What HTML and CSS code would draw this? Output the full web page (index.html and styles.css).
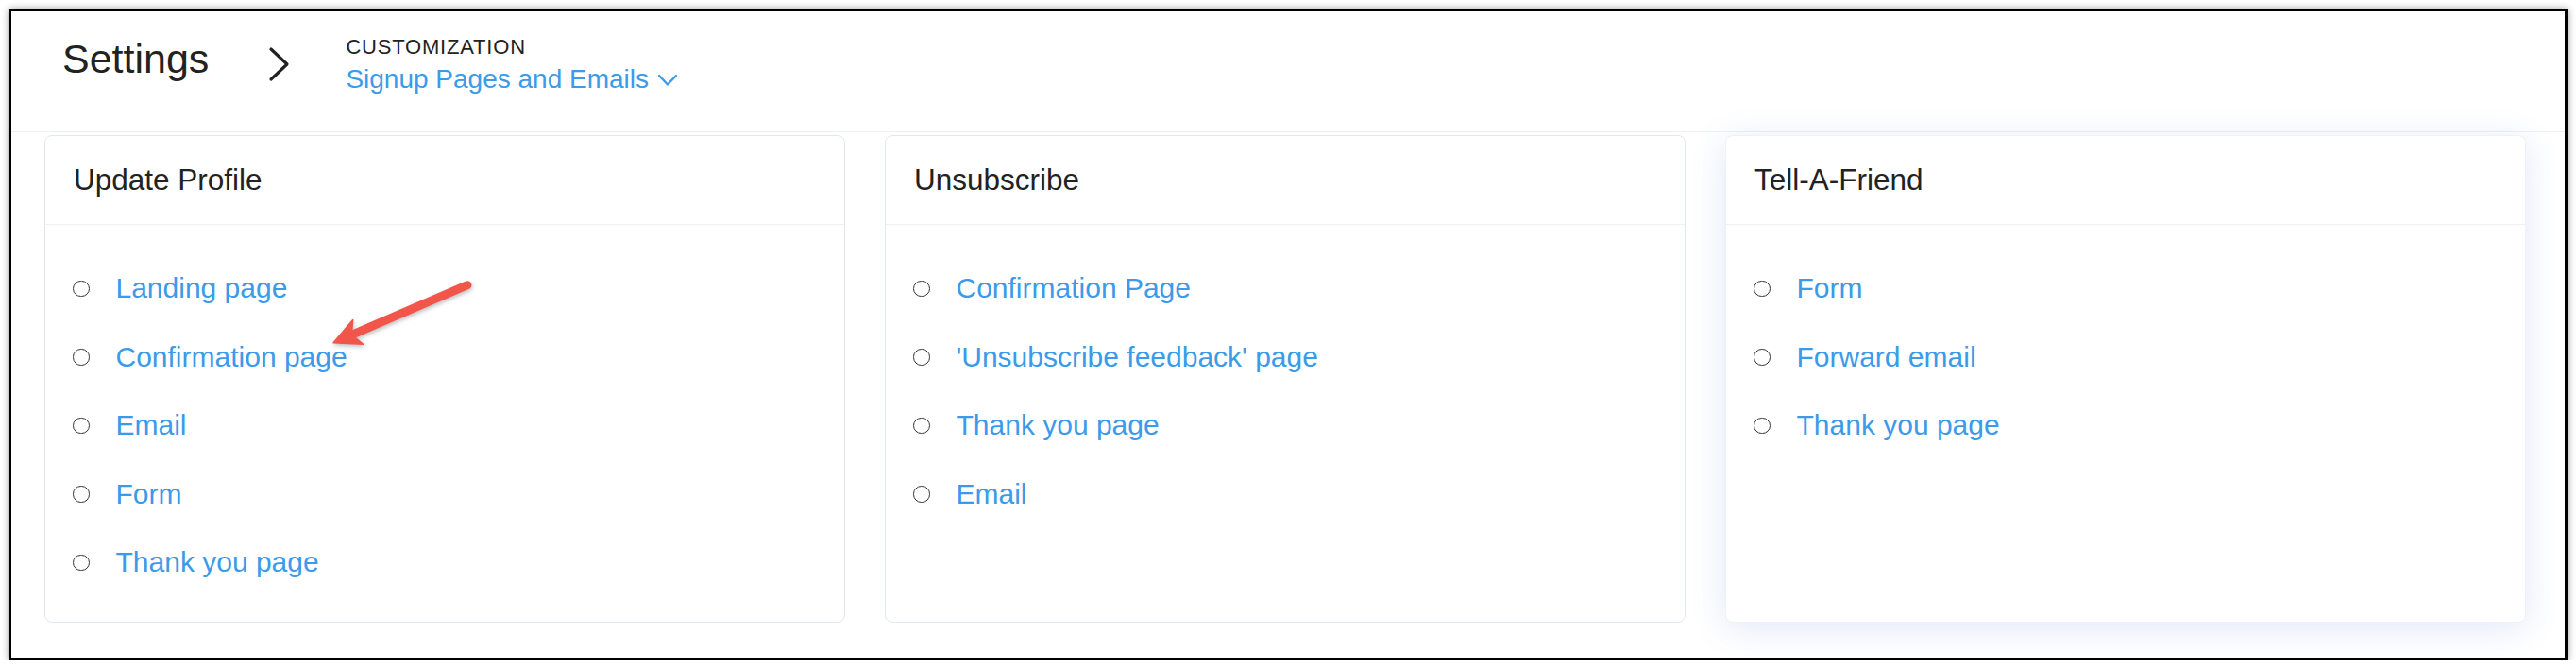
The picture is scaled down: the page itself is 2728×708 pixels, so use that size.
FILE: index.html
```html
<!DOCTYPE html>
<html lang="en">
<head>
<meta charset="utf-8">
<title>Settings - Signup Pages and Emails</title>
<link rel="stylesheet" href="styles.css">
</head>
<body>
<div class="frame">
  <header class="topbar">
    <h1 class="page-title">Settings</h1>
    <svg class="crumb-sep" width="26" height="38" viewBox="0 0 26 38" aria-hidden="true">
      <polyline points="4,3 21,19 4,35" fill="none" stroke="#222" stroke-width="3.2" stroke-linecap="round" stroke-linejoin="round"/>
    </svg>
    <div class="crumb">
      <div class="crumb-label">CUSTOMIZATION</div>
      <div class="crumb-current">Signup Pages and Emails<svg class="caret" width="22" height="14" viewBox="0 0 22 14" aria-hidden="true"><polyline points="2,2 11,11.5 20,2" fill="none" stroke="currentColor" stroke-width="2.4" stroke-linecap="round" stroke-linejoin="round"/></svg></div>
    </div>
  </header>

  <main class="cards">
    <section class="card">
      <div class="card-head">Update Profile</div>
      <ul class="card-list">
        <li><span class="dot"></span><a href="#">Landing page</a></li>
        <li><span class="dot"></span><a href="#">Confirmation page</a></li>
        <li><span class="dot"></span><a href="#">Email</a></li>
        <li><span class="dot"></span><a href="#">Form</a></li>
        <li><span class="dot"></span><a href="#">Thank you page</a></li>
      </ul>
    </section>
    <section class="card">
      <div class="card-head">Unsubscribe</div>
      <ul class="card-list">
        <li><span class="dot"></span><a href="#">Confirmation Page</a></li>
        <li><span class="dot"></span><a href="#">'Unsubscribe feedback' page</a></li>
        <li><span class="dot"></span><a href="#">Thank you page</a></li>
        <li><span class="dot"></span><a href="#">Email</a></li>
      </ul>
    </section>
    <section class="card card-hover">
      <div class="card-head">Tell-A-Friend</div>
      <ul class="card-list">
        <li><span class="dot"></span><a href="#">Form</a></li>
        <li><span class="dot"></span><a href="#">Forward email</a></li>
        <li><span class="dot"></span><a href="#">Thank you page</a></li>
      </ul>
    </section>
  </main>

  <svg class="annotation" width="180" height="100" viewBox="0 0 180 100" aria-hidden="true">
    <g transform="translate(155 16.7) rotate(156.75)">
      <line x1="0" y1="0" x2="134" y2="0" stroke="#f2564a" stroke-width="9" stroke-linecap="round"/>
      <polygon points="154.5,0 126,-14 133.5,0 126,14" fill="#f2564a" stroke="#f2564a" stroke-width="1.5" stroke-linejoin="round"/>
    </g>
  </svg>
</div>
</body>
</html>
```

FILE: styles.css
```css
* {
  box-sizing: border-box;
}

html, body {
  margin: 0;
  padding: 0;
  background: #ffffff;
}

body {
  padding: 10px 0 0 10px;
  font-family: "Liberation Sans", Arial, Helvetica, sans-serif;
  color: #222222;
}

.frame {
  position: relative;
  width: 2709px;
  height: 689px;
  border: 2px solid #000000;
  border-right-width: 3px;
  border-bottom-width: 3px;
  background: #ffffff;
  box-shadow: 0 0 8px rgba(0, 0, 0, 0.45);
  overflow: hidden;
}

/* ---------- top bar ---------- */
.topbar {
  display: flex;
  align-items: flex-start;
  height: 128px;
  padding: 23px 0 0 54px;
  border-bottom: 1px solid #edf0f5;
}

.page-title {
  margin: 2px 62px 0 0;
  font-size: 43px;
  line-height: 50px;
  font-weight: normal;
  color: #222222;
}

.crumb-sep {
  display: block;
  margin-top: 14px;
  flex: none;
}

.crumb {
  margin-left: 57px;
}

.crumb-label {
  font-size: 22px;
  line-height: 30px;
  letter-spacing: 0.8px;
  color: #222222;
}

.crumb-current {
  margin-top: 2.6px;
  font-size: 28px;
  line-height: 32px;
  color: #3c9be8;
  display: flex;
  align-items: center;
}

.caret {
  display: block;
  margin-left: 9px;
  margin-top: 2px;
  color: #3c9be8;
}

/* ---------- cards ---------- */
.cards {
  display: grid;
  grid-template-columns: repeat(3, 848px);
  column-gap: 42px;
  margin-top: 3px;
  padding-left: 35px;
}

.card {
  height: 516px;
  background: #ffffff;
  border: 1px solid #e3e8ef;
  border-radius: 8px;
}

.card-hover {
  border-color: #edf1f8;
  box-shadow: 0 6px 36px rgba(70, 110, 200, 0.16);
}

.card-head {
  display: flex;
  align-items: center;
  height: 94px;
  padding-left: 30px;
  border-bottom: 1px solid #eef1f5;
  font-size: 31.5px;
  color: #222222;
}

.card-list {
  list-style: none;
  margin: 0;
  padding: 31px 30px 0 29px;
}

.card-list li {
  display: flex;
  align-items: center;
  height: 72.5px;
}

.dot {
  flex: none;
  width: 17.5px;
  height: 17.5px;
  border: 1.5px solid #333333;
  border-radius: 50%;
  margin-right: 28px;
}

.card-list a {
  font-size: 30px;
  color: #3c9be8;
  text-decoration: none;
}

/* ---------- annotation arrow ---------- */
.annotation {
  position: absolute;
  left: 328px;
  top: 273px;
  overflow: visible;
  filter: drop-shadow(1px 2px 2px rgba(0, 0, 0, 0.25));
}
```
